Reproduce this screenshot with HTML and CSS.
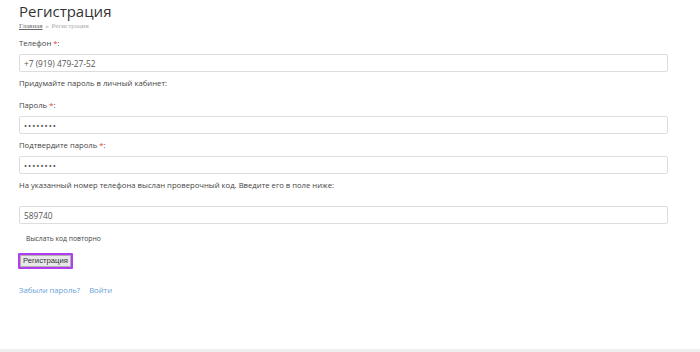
FILE: index.html
```html
<!DOCTYPE html>
<html lang="ru">
<head>
    <meta charset="UTF-8">
    <meta name="viewport" content="width=device-width, initial-scale=1.0">
    <title>Регистрация</title>
    <link rel="stylesheet" href="styles.css">
</head>
<body>

    <div class="page">
        <h1 class="page-title">Регистрация</h1>
        <div class="breadcrumbs">
            <a href="#">Главная</a> <span class="sep">»</span> <span class="current">Регистрация</span>
        </div>

        <form class="reg-form" onsubmit="return false;">
            <label for="phone">Телефон <span class="req">*</span>:</label>
            <input type="text" id="phone" value="+7 (919) 479-27-52">

            <p class="note">Придумайте пароль в личный кабинет:</p>

            <label for="pass">Пароль <span class="req">*</span>:</label>
            <input type="password" id="pass" value="12345678">

            <label for="pass2">Подтвердите пароль <span class="req">*</span>:</label>
            <input type="password" id="pass2" value="12345678">

            <p class="note note-code">На указанный номер телефона выслан проверочный код. Введите его в поле ниже:</p>

            <input type="text" id="code" class="input-code" value="589740">

            <a class="resend" href="#">Выслать код повторно</a>

            <button class="btn-submit" type="submit">Регистрация</button>

            <div class="footer-links">
                <a href="#">Забыли пароль?</a>
                <a href="#">Войти</a>
            </div>
        </form>
    </div>

    <div class="bottom-line"></div>

</body>
</html>
```

FILE: styles.css
```css
body {
    font-family: 'Open Sans', 'Noto Sans', sans-serif;
    background-color: #fff;
    margin: 0;
    padding: 0;
    color: #444;
    height: 352px;
    display: flex;
    flex-direction: column;
}

.page {
    flex: 1;
    padding: 0 32px 0 19px;
}

.page-title {
    font-size: 15px;
    font-weight: 400;
    color: #333;
    margin: 0;
    padding-top: 1px;
    line-height: 20px;
}

.breadcrumbs {
    font-family: 'Liberation Serif', serif;
    font-size: 7px;
    line-height: 10px;
    color: #aaa;
    margin-bottom: 7px;
}

.breadcrumbs a {
    color: #666;
    text-decoration: underline;
}

.breadcrumbs .sep {
    color: #aaa;
    margin: 0 1px;
}

.reg-form label {
    display: block;
    font-size: 7.7px;
    line-height: 10px;
    color: #444;
    margin-bottom: 6px;
}

.req {
    color: #e53935;
}

.reg-form input {
    display: block;
    box-sizing: border-box;
    width: 100%;
    height: 18px;
    padding: 0 4px;
    border: 1px solid #ddd;
    border-radius: 2px;
    font-family: 'Open Sans', sans-serif;
    font-size: 8.3px;
    color: #555;
    margin: 0 0 6px;
}

.reg-form input[type="password"] {
    letter-spacing: 1px;
}

.note {
    font-size: 7.7px;
    line-height: 10px;
    color: #444;
    margin: 0 0 12px;
}

.note-code {
    margin-bottom: 16px;
}

.reg-form .input-code {
    margin-bottom: 10px;
}

.resend {
    display: block;
    font-size: 6.8px;
    line-height: 10px;
    color: #444;
    text-decoration: none;
    margin: 0 0 9px 7px;
}

.btn-submit {
    display: block;
    box-sizing: border-box;
    font-family: 'Liberation Sans', sans-serif;
    font-size: 7.7px;
    line-height: 10px;
    color: #333;
    background-color: #e8e8e8;
    border: 2px solid #b23cf0;
    box-shadow: inset 0 0 0 1px #b0b0b0;
    border-radius: 1px;
    padding: 1px 3px;
    height: 16px;
    margin: 0 0 16px -1px;
}

.footer-links {
    font-size: 7.7px;
    line-height: 10px;
}

.footer-links a {
    color: #6a9fd8;
    text-decoration: none;
    margin-right: 7px;
}

.bottom-line {
    height: 3px;
    background-color: #efefef;
}
```
